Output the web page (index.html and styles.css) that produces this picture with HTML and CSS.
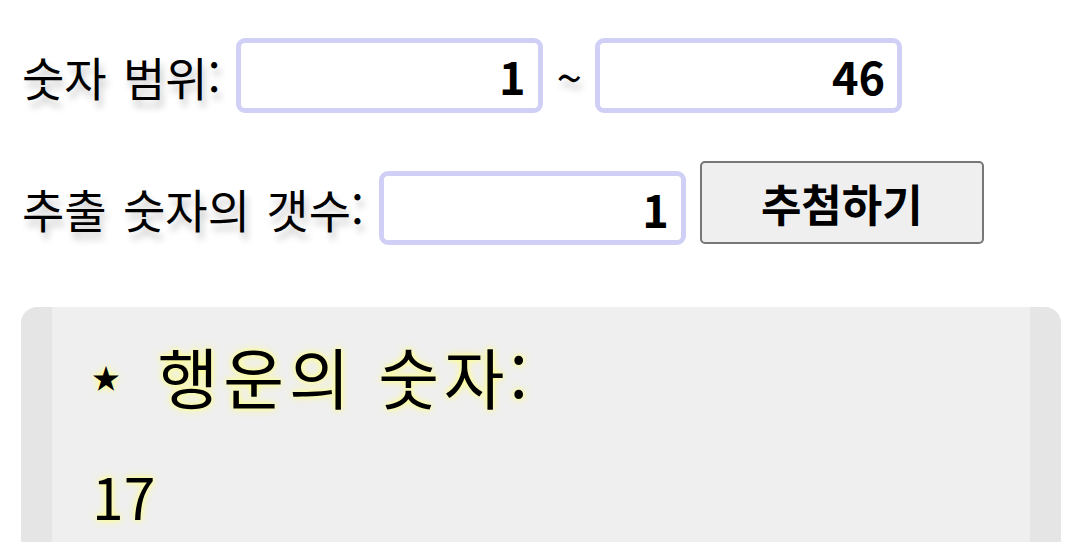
FILE: index.html
```html
<!DOCTYPE html>
<html lang="ko">
<head>
<meta charset="utf-8">
<title>행운의 숫자</title>
<link rel="stylesheet" href="styles.css">
</head>
<body>
<div class="page">
  <div class="row row-range">
    <label class="label">숫자 범위:</label>
    <input class="num" type="text" value="1">
    <span class="tilde">~</span>
    <input class="num" type="text" value="46">
  </div>
  <div class="row row-count">
    <label class="label">추출 숫자의 갯수:</label>
    <input class="num" type="text" value="1">
    <button class="draw">추첨하기</button>
  </div>
  <div class="result">
    <h2 class="result-title"><span class="star">★</span> 행운의 숫자:</h2>
    <div class="result-num">17</div>
  </div>
</div>
</body>
</html>
```

FILE: styles.css
```css
html, body {
  margin: 0;
  padding: 0;
  background: #ffffff;
}
.page {
  padding: 38px 19px 0 21px;
  font-family: "Noto Sans CJK KR", "Noto Sans", sans-serif;
  color: #000;
}
.row {
  display: flex;
  align-items: center;
}
.row-count {
  margin-top: 58px;
}
.label {
  font-size: 46px;
  word-spacing: 3.5px;
  padding-left: 1px;
  text-shadow: 3px 7px 7px rgba(0,0,0,0.22);
  margin-right: 15px;
}
.num {
  box-sizing: border-box;
  width: 307px;
  height: 75px;
  border: 5px solid #d0d0f6;
  border-radius: 9px;
  background: #fff;
  text-align: right;
  font-family: "Noto Sans CJK KR", "Noto Sans", sans-serif;
  font-weight: bold;
  font-size: 45px;
  padding: 0 12px;
  color: #000;
  outline: none;
}
.row-count .num {
  height: 74px;
}
.tilde {
  font-size: 46px;
  margin: 0 13px 0 14px;
  text-shadow: 3px 7px 7px rgba(0,0,0,0.22);
}
.draw {
  box-sizing: border-box;
  margin-left: 14px;
  width: 284px;
  height: 83px;
  border: 2px solid #777;
  border-radius: 5px;
  background: #efefef;
  font-family: "Noto Sans CJK KR", "Noto Sans", sans-serif;
  font-weight: bold;
  font-size: 44px;
  color: #000;
  align-self: flex-start;
  margin-top: -10px;
}
.result {
  margin-top: 62px;
  background: #efefef;
  border-left: 31px solid #e5e5e5;
  border-right: 31px solid #e5e5e5;
  border-radius: 16px 16px 0 0;
  padding: 26px 40px 40px 40px;
  min-height: 300px;
}
.result-title {
  margin: 0;
  font-weight: normal;
  font-size: 66px;
  line-height: 1.3;
  letter-spacing: 5px;
  text-shadow: 0 0 8px #ffff80, 0 0 4px #ffffa0;
}
.result-title .star {
  font-size: 28px;
  letter-spacing: 0;
  margin-right: 14px;
  vertical-align: 0.55em;
}
.result-num {
  margin-top: 42px;
  font-size: 57px;
  line-height: 1.2;
  text-shadow: 0 0 8px #ffff80, 0 0 4px #ffffa0;
}
```
